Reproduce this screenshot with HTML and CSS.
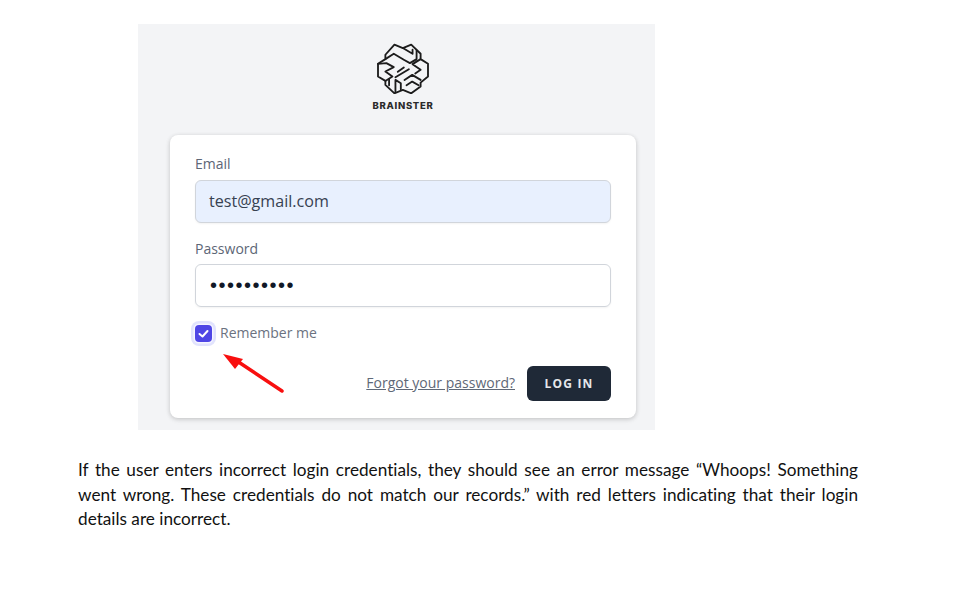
FILE: index.html
```html
<!DOCTYPE html>
<html lang="en">
<head>
<meta charset="utf-8">
<title>Brainster login</title>
<link rel="stylesheet" href="styles.css">
</head>
<body>
<main class="page">
  <figure class="shot">
    <div class="brand">
      <svg class="logo" viewBox="110 40 155 152" width="52" height="51" aria-hidden="true">
        <g fill="none" stroke="#1c1c1c" stroke-width="5.500" stroke-linejoin="round" stroke-linecap="round">
          <path d="M135 75 L162 45 L187 55 L212 45 L240 72 V88 L262 102 V140 L240 158 V170 L212 190 L187 180 L162 190 L135 165 V153 L113 140 V102 L135 88 Z"/>
          <path d="M135 88 L160 72 L190 90 M187 55 L216 72 L216 60 M228 62 V88 L208 100 L190 90 M240 88 L216 103 L240 120 L224 131"/>
          <path d="M113 102 L138 100 L160 112 L135 125 L156 140 L135 153 M172 126 L190 113 M165 142 L205 118"/>
          <path d="M146 166 V148 M165 186 V150 L181 160 V178 M192 150 L215 135 L240 150 M198 166 L215 155 L234 166"/>
        </g>
      </svg>
      <div class="wordmark">BRAINSTER</div>
    </div>
    <form class="card">
      <label class="label">Email</label>
      <div class="input filled">test@gmail.com</div>
      <label class="label second">Password</label>
      <div class="input dots">••••••••••</div>
      <div class="remember">
        <span class="check">
          <svg viewBox="0 0 17 17" width="17" height="17" aria-hidden="true"><path d="M4.500 9 L7.500 11.500 L12.500 6" fill="none" stroke="#fff" stroke-width="2" stroke-linecap="round" stroke-linejoin="round"/></svg>
        </span>
        <span class="remember-text">Remember me</span>
        <svg class="arrow" viewBox="0 0 64 44" width="64" height="44" aria-hidden="true">
          <path d="M61 40 L16 10" stroke="#f80f0f" stroke-width="3.500" stroke-linecap="round"/>
          <path d="M2 3 L22 8 L14 18 Z" fill="#f80f0f"/>
        </svg>
      </div>
      <div class="actions">
        <a class="forgot">Forgot your password?</a>
        <span class="login">LOG IN</span>
      </div>
    </form>
  </figure>
  <p class="copy">If the user enters incorrect login credentials, they should see an error message “Whoops! Something went wrong. These credentials do not match our records.” with red letters indicating that their login details are incorrect.</p>
</main>
</body>
</html>
```
FILE: styles.css
```css
* { box-sizing: border-box; }
html, body { margin: 0; background: #fff; }
.page { padding: 24px 104px 0 78px; width: 962px; }
.shot {
  margin: 0 0 0 60px;
  width: 517px;
  height: 406px;
  background: #f3f4f6;
  padding: 19px 19px 0 32px;
  display: flex;
  flex-direction: column;
}
.brand { display: flex; flex-direction: column; align-items: center; height: 92px; }
.logo { display: block; }
.wordmark {
  margin-top: 6px;
  font: 800 9.500px/12px "Inter", "Liberation Sans", sans-serif;
  letter-spacing: 0.7px;
  color: #2b2b2b;
}
.card {
  width: 466px;
  height: 283px;
  background: #fff;
  border-radius: 8px;
  box-shadow: 0 1px 4px rgba(0,0,0,.16), 0 2px 6px rgba(0,0,0,.06);
  padding: 19px 25px 0;
  font-family: "Open Sans", "Noto Sans", sans-serif;
  position: relative;
}
.label { display: block; font-size: 14px; line-height: 20px; color: #5d6676; }
.second { margin-top: 16px; }
.input {
  margin-top: 6px;
  height: 43px;
  border: 1px solid #d1d5db;
  border-radius: 6px;
  padding: 0 13px;
  font-size: 16.100px;
  line-height: 41px;
  color: #374151;
  box-shadow: 0 1px 2px rgba(0,0,0,.05);
}
.second + .input { margin-top: 5px; }
.filled { background: #e8f0fe; }
.dots { color: #111827; font: 20px/41px "Liberation Sans", sans-serif; letter-spacing: 1.500px; word-spacing: 0; padding-left: 14px; }
.remember { display: flex; align-items: center; margin-top: 14px; height: 24px; gap: 8px; position: relative; }
.check {
  width: 17px; height: 17px;
  background: #4f46e5;
  border-radius: 4px;
  box-shadow: 0 0 0 1.500px #f5f5ff, 0 0 0 4px #e1e3fd;
  display: block;
}
.check svg { display: block; }
.remember-text { font-size: 14px; line-height: 20px; color: #6b7280; }
.arrow { position: absolute; left: 26px; top: 30px; }
.actions { display: flex; justify-content: flex-end; align-items: center; gap: 12px; margin-top: 21px; }
.forgot { font-size: 14px; line-height: 18px; padding-bottom: 2px; color: #5f6877; text-decoration: underline; }
.login {
  width: 84px; height: 35px;
  background: #1f2937;
  border-radius: 6px;
  color: #e5e7eb;
  font-size: 12px;
  font-weight: 700;
  letter-spacing: 1.200px;
  line-height: 35px;
  text-align: center;
}
.copy {
  margin: 28px 0 0;
  font: 17.200px/24.500px "Lato", "Liberation Sans", sans-serif;
  font-variant-ligatures: none;
  color: #111;
  text-align: justify;
  width: 780px;
}
```
